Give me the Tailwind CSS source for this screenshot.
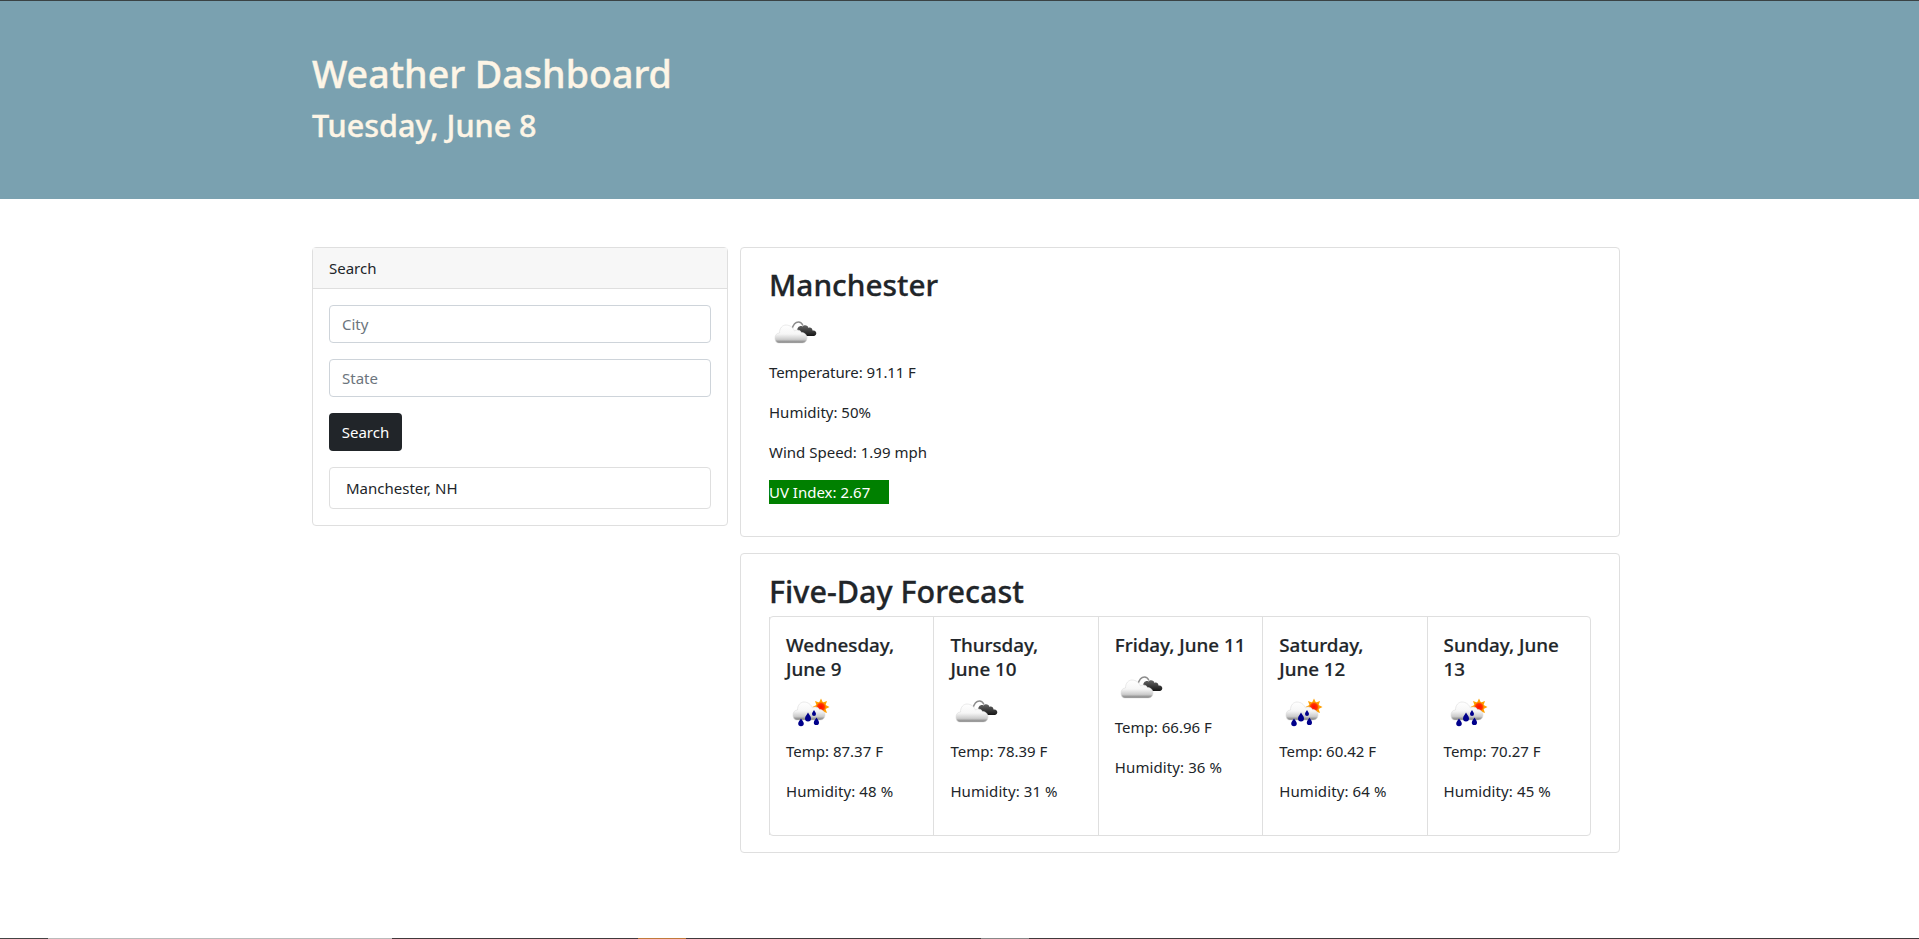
<!DOCTYPE html>
<html lang="en">
<head>
    <meta charset="UTF-8">
    <meta name="viewport" content="width=device-width, initial-scale=1.0">
    <title>Weather Dashboard</title>
    <script src="https://cdn.jsdelivr.net/npm/@tailwindcss/browser@4"></script>
</head>
<body class="bg-white text-[#212529] font-['Noto_Sans',sans-serif] text-[15px] leading-6">
    <!-- Icon sprites -->
    <svg width="0" height="0" class="absolute">
        <defs>
            <linearGradient id="white-cloud" x1="0" y1="0" x2="0" y2="1">
                <stop offset="0" stop-color="#ffffff"/>
                <stop offset="0.5" stop-color="#f6f6f6"/>
                <stop offset="0.8" stop-color="#cccccc"/>
                <stop offset="1" stop-color="#757575"/>
            </linearGradient>
            <linearGradient id="dark-cloud" x1="0" y1="0" x2="0" y2="1">
                <stop offset="0" stop-color="#666666"/>
                <stop offset="1" stop-color="#161616"/>
            </linearGradient>
            <radialGradient id="sun-core">
                <stop offset="0" stop-color="#ff0d00"/>
                <stop offset="0.65" stop-color="#ff3000"/>
                <stop offset="1" stop-color="#ff9a00"/>
            </radialGradient>
            <symbol id="icon-clouds" viewBox="0 0 50 50">
                <path d="M23 19.500C24 15 26.500 12 29.500 12C31.500 12 33 13.300 34 15.500" fill="none" stroke="#8c8c8c" stroke-width="1.400"/>
                <path d="M29 26C26 26 26 21.500 28.500 21C27.500 17.500 31 15 33.500 16.500C35 14.500 39 15 39.500 18C41 17 43.500 18 43.500 20.500C46 20 47.500 21.500 47.300 23.500C47 25.500 45.500 26 44 26Z" fill="url(#dark-cloud)"/>
                <path d="M10 33C7 33 6 30.500 6 28C6 25 8 23 10.500 23C10.500 18 13.500 15 17 15C21 15 24 17.500 25.500 21C27 19.500 31 19.500 32.500 22.500C36 22.500 38 25 38 28C38 31 36 33 33 33Z" fill="url(#white-cloud)" stroke="#dcdcdc" stroke-width="0.600"/>
            </symbol>
            <symbol id="icon-rain" viewBox="0 0 50 50">
                <polygon fill="#ffa000" points="43.500,18 39.600,19.900 41,24 36.900,22.600 35,26.500 33.100,22.600 29,24 30.400,19.900 26.500,18 30.400,16.100 29,12 33.100,13.400 35,9.500 36.900,13.400 41,12 39.600,16.100"/>
                <circle cx="35" cy="18" r="5" fill="url(#sun-core)"/>
                <path d="M11 31C8 31 7 28.500 7 26C7 23 9 21 11.500 21C11.500 16 14.500 13 18 13C22 13 25 15.500 26.500 19C28 17.500 32 17.500 33.500 20.500C37 20.500 39 23 39 26C39 29 37 31 34 31Z" fill="url(#white-cloud)" stroke="#dcdcdc" stroke-width="0.600"/>
                <g fill="#00008b">
                    <path d="M15 29.500C16 31.500 17.800 32.500 17.800 34.500A2.800 2.800 0 0 1 12.200 34.500C12.200 32.500 14 31.500 15 29.500Z"/>
                    <path d="M22 23.500C23 25.800 25 27 25 29.500A3 3 0 0 1 19 29.500C19 27 21 25.800 22 23.500Z"/>
                    <path d="M28 21C28.700 22.500 30 23.500 30 25A2 2 0 0 1 26 25C26 23.500 27.300 22.500 28 21Z"/>
                    <path d="M30.500 28.500C31.400 30.500 33 31.500 33 33.500A2.600 2.600 0 0 1 27.800 33.500C27.800 31.500 29.600 30.500 30.500 28.500Z"/>
                </g>
            </symbol>
        </defs>
    </svg>

    <div class="flex flex-col h-screen overflow-hidden">
        <!-- Jumbotron -->
        <header class="bg-[#7aa1b0] border-t border-[#3a4244] h-[199px] pl-[312px] pt-12 text-[#fdf5e6] font-medium [-webkit-text-stroke:0.4px]">
            <h1 class="text-[37.6px] leading-[50px] mb-1.5">Weather Dashboard</h1>
            <h2 class="text-[30.5px] leading-10">Tuesday, June 8</h2>
        </header>

        <main class="flex items-start gap-3 ml-[312px] w-[1308px] mt-12">
            <!-- Search -->
            <section class="w-[416px] shrink-0 border border-[#dfdfdf] rounded">
                <div class="h-[41px] px-4 py-2 bg-[#f7f7f7] border-b border-[#dfdfdf]">Search</div>
                <form class="p-4 flex flex-col">
                    <input placeholder="City" class="h-[38px] px-3 mb-4 border border-[#ced4da] rounded placeholder:text-[#6c757d]">
                    <input placeholder="State" class="h-[38px] px-3 mb-4 border border-[#ced4da] rounded placeholder:text-[#6c757d]">
                    <button type="button" class="self-start w-[73px] h-[38px] mb-4 bg-[#212529] text-white rounded">Search</button>
                    <div class="h-[42px] px-4 py-2 border border-[#dfdfdf] rounded">Manchester, NH</div>
                </form>
            </section>

            <div class="flex-1 flex flex-col gap-4">
                <!-- Current weather -->
                <section class="border border-[#dfdfdf] rounded pt-4 pb-4 px-7">
                    <h2 class="text-[29.8px] leading-[42px] font-medium mb-1 [-webkit-text-stroke:0.3px]">Manchester</h2>
                    <svg class="w-[50px] h-[50px]"><use href="#icon-clouds"/></svg>
                    <p class="mb-4 tracking-[-0.1px]">Temperature: 91.11 F</p>
                    <p class="mb-4">Humidity: 50%</p>
                    <p class="mb-4">Wind Speed: 1.99 mph</p>
                    <p class="mb-4 w-[120px] bg-[#008000] text-white">UV Index: 2.67</p>
                </section>

                <!-- Forecast -->
                <section class="border border-[#dfdfdf] rounded pt-4 pb-4 px-7">
                    <h2 class="text-[30.5px] leading-[42px] font-medium mb-1 [-webkit-text-stroke:0.3px]">Five-Day Forecast</h2>
                    <div class="border border-[#dfdfdf] rounded">
                        <div class="grid grid-cols-5 -mx-px">
                            <article class="p-4 border-l border-[#dfdfdf]">
                                <h5 class="text-[18.8px] leading-6 font-medium mb-2 [-webkit-text-stroke:0.2px]">Wednesday,<br>June 9</h5>
                                <svg class="w-[50px] h-[50px]"><use href="#icon-rain"/></svg>
                                <p class="mb-4">Temp: 87.37 F</p>
                                <p class="mb-4 tracking-[0.1px]">Humidity: 48 %</p>
                            </article>
                            <article class="p-4 border-l border-[#dfdfdf]">
                                <h5 class="text-[18.8px] leading-6 font-medium mb-2 [-webkit-text-stroke:0.2px]">Thursday,<br>June 10</h5>
                                <svg class="w-[50px] h-[50px]"><use href="#icon-clouds"/></svg>
                                <p class="mb-4">Temp: 78.39 F</p>
                                <p class="mb-4 tracking-[0.1px]">Humidity: 31 %</p>
                            </article>
                            <article class="p-4 border-l border-[#dfdfdf]">
                                <h5 class="text-[18.8px] leading-6 font-medium mb-2 whitespace-nowrap [-webkit-text-stroke:0.2px]">Friday, June 11</h5>
                                <svg class="w-[50px] h-[50px]"><use href="#icon-clouds"/></svg>
                                <p class="mb-4">Temp: 66.96 F</p>
                                <p class="mb-4 tracking-[0.1px]">Humidity: 36 %</p>
                            </article>
                            <article class="p-4 border-l border-[#dfdfdf]">
                                <h5 class="text-[18.8px] leading-6 font-medium mb-2 [-webkit-text-stroke:0.2px]">Saturday,<br>June 12</h5>
                                <svg class="w-[50px] h-[50px]"><use href="#icon-rain"/></svg>
                                <p class="mb-4">Temp: 60.42 F</p>
                                <p class="mb-4 tracking-[0.1px]">Humidity: 64 %</p>
                            </article>
                            <article class="p-4 border-l border-[#dfdfdf]">
                                <h5 class="text-[18.8px] leading-6 font-medium mb-2 [-webkit-text-stroke:0.2px]">Sunday, June<br>13</h5>
                                <svg class="w-[50px] h-[50px]"><use href="#icon-rain"/></svg>
                                <p class="mb-4">Temp: 70.27 F</p>
                                <p class="mb-4 tracking-[0.1px]">Humidity: 45 %</p>
                            </article>
                        </div>
                    </div>
                </section>
            </div>
        </main>

        <!-- Sliver of the window below the page -->
        <div class="mt-auto h-px flex bg-[#41393c]">
            <div class="w-12 bg-[#444]"></div>
            <div class="w-[344px] bg-[#bbb]"></div>
            <div class="w-[246px]"></div>
            <div class="w-12 bg-[#c07a3a]"></div>
            <div class="w-[295px]"></div>
            <div class="w-12 bg-[#888]"></div>
        </div>
    </div>
</body>
</html>
